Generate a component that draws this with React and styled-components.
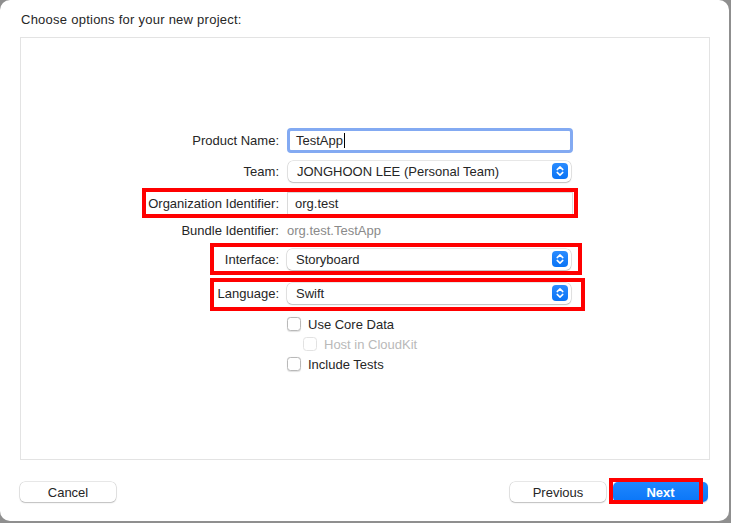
import React from "react";
import styled, { createGlobalStyle } from "styled-components";

const Global = createGlobalStyle`
  html, body {
    margin: 0;
    padding: 0;
    width: 731px;
    height: 523px;
    overflow: hidden;
    background: #8f8f8f;
  }
  * { box-sizing: border-box; }
`;

const Window = styled.div`
  width: 729px;
  height: 521px;
  background: #ffffff;
  border-radius: 10px;
  display: flex;
  flex-direction: column;
  padding: 0 19px 0 20px;
  font-family: "Liberation Sans", Arial, sans-serif;
  font-size: 13px;
  color: #262626;
`;

const Title = styled.div`
  height: 37px;
  display: flex;
  align-items: center;
  padding: 1px 0 0 1px;
  letter-spacing: 0.25px;
`;

const Panel = styled.div`
  height: 423px;
  border: 1px solid #e3e3e3;
  padding-top: 89px;
  display: flex;
  flex-direction: column;
`;

const Row = styled.div`
  position: relative;
  display: flex;
  align-items: center;
  gap: 8px;
  height: ${(p) => p.$h || 22}px;
  margin-top: ${(p) => p.$mt || 0}px;
`;

const Label = styled.div`
  width: 258px;
  text-align: right;
  white-space: nowrap;
`;

const TextField = styled.div`
  width: 286px;
  height: ${(p) => (p.$focus ? 25 : 23)}px;
  display: flex;
  align-items: center;
  padding-left: ${(p) => (p.$focus ? 6 : 7)}px;
  background: #fff;
  border: ${(p) => (p.$focus ? "3px solid #83aaf2" : "1px solid #dadada")};
  border-radius: ${(p) => (p.$focus ? 4 : 0)}px;
`;

const Caret = styled.span`
  display: inline-block;
  width: 1px;
  height: 15px;
  background: #000;
  margin-left: 1px;
`;

const Value = styled.div`
  color: ${(p) => (p.$muted ? "#8a8a8a" : "inherit")};
`;

const Popup = styled.div`
  width: ${(p) => p.$w || 284}px;
  height: ${(p) => p.$h || 21}px;
  margin-left: ${(p) => p.$ml || 0}px;
  display: flex;
  align-items: center;
  justify-content: space-between;
  padding: 0 3px 0 9px;
  background: #fff;
  border-radius: 5px;
  box-shadow: 0 0 0 0.5px rgba(0, 0, 0, 0.18), 0 1px 1.5px rgba(0, 0, 0, 0.18);
`;

const Stepper = styled.div`
  width: 16px;
  height: 16px;
  border-radius: 4px;
  background: linear-gradient(#2a8cff, #0a74f5);
  display: flex;
  align-items: center;
  justify-content: center;
`;

const Highlight = styled.div`
  position: absolute;
  left: ${(p) => p.$l}px;
  top: ${(p) => p.$t}px;
  width: ${(p) => p.$w}px;
  height: ${(p) => p.$hh}px;
  border: 4px solid #ff0000;
  pointer-events: none;
`;

const CheckRow = styled.div`
  height: 20px;
  display: flex;
  align-items: center;
  gap: 7px;
  margin-left: ${(p) => p.$indent}px;
  margin-top: ${(p) => p.$mt || 0}px;
  color: ${(p) => (p.$disabled ? "#b9b9b9" : "inherit")};
`;

const Box = styled.div`
  width: 14px;
  height: 14px;
  border-radius: 3.5px;
  background: #fff;
  border: 1px solid ${(p) => (p.$disabled ? "#e2e2e2" : "#b9b9b9")};
  box-shadow: ${(p) => (p.$disabled ? "none" : "0 0.5px 1px rgba(0,0,0,0.12)")};
`;

const Footer = styled.div`
  margin-top: 22px;
  display: flex;
  justify-content: space-between;
  align-items: center;
`;

const Group = styled.div`
  display: flex;
  gap: 7px;
  padding-right: 2px;
`;

const Button = styled.div`
  position: relative;
  width: ${(p) => p.$w || 96}px;
  height: 20px;
  border-radius: 5px;
  display: flex;
  align-items: center;
  justify-content: center;
  background: ${(p) => (p.$primary ? "linear-gradient(#1f87ff, #0a76f7)" : "#fff")};
  color: ${(p) => (p.$primary ? "#fff" : "#262626")};
  font-weight: ${(p) => (p.$primary ? 600 : 400)};
  box-shadow: ${(p) =>
    p.$primary
      ? "0 0.5px 1px rgba(0,0,0,0.2)"
      : "0 0 0 0.5px rgba(0,0,0,0.18), 0 1px 1.5px rgba(0,0,0,0.18)"};
`;

const StepIcon = () => (
  <Stepper>
    <svg width="10" height="12" viewBox="0 0 10 12" fill="none">
      <path d="M2.2 4.6 L5 1.9 L7.8 4.6" stroke="#fff" strokeWidth="1.5" strokeLinecap="round" strokeLinejoin="round" />
      <path d="M2.2 7.4 L5 10.1 L7.8 7.4" stroke="#fff" strokeWidth="1.5" strokeLinecap="round" strokeLinejoin="round" />
    </svg>
  </Stepper>
);

export default function App() {
  return (
    <>
      <Global />
      <Window>
        <Title>Choose options for your new project:</Title>
        <Panel>
          <Row $h={26}>
            <Label>Product Name:</Label>
            <TextField $focus>
              TestApp
              <Caret />
            </TextField>
          </Row>
          <Row $mt={7} $h={22}>
            <Label>Team:</Label>
            <Popup $w={283} $ml={1}>
              JONGHOON LEE (Personal Team)
              <StepIcon />
            </Popup>
          </Row>
          <Row $mt={9} $h={25}>
            <Label>Organization Identifier:</Label>
            <TextField>org.test</TextField>
            <Highlight $l={121} $t={-3} $w={436} $hh={30} />
          </Row>
          <Row $mt={5} $h={18}>
            <Label>Bundle Identifier:</Label>
            <Value $muted>org.test.TestApp</Value>
          </Row>
          <Row $mt={9} $h={22}>
            <Label>Interface:</Label>
            <Popup $h={21}>
              Storyboard
              <StepIcon />
            </Popup>
            <Highlight $l={189} $t={-5} $w={372} $hh={32} />
          </Row>
          <Row $mt={12} $h={22}>
            <Label>Language:</Label>
            <Popup $h={21}>
              Swift
              <StepIcon />
            </Popup>
            <Highlight $l={189} $t={-4} $w={375} $hh={33} />
          </Row>
          <CheckRow $indent={266} $mt={10}>
            <Box />
            Use Core Data
          </CheckRow>
          <CheckRow $indent={282} $disabled>
            <Box $disabled />
            Host in CloudKit
          </CheckRow>
          <CheckRow $indent={266}>
            <Box />
            Include Tests
          </CheckRow>
        </Panel>
        <Footer>
          <Button>Cancel</Button>
          <Group>
            <Button>Previous</Button>
            <Button $primary $w={95}>
              Next
              <Highlight $l={-4} $t={-4} $w={94} $hh={26} />
            </Button>
          </Group>
        </Footer>
      </Window>
    </>
  );
}
